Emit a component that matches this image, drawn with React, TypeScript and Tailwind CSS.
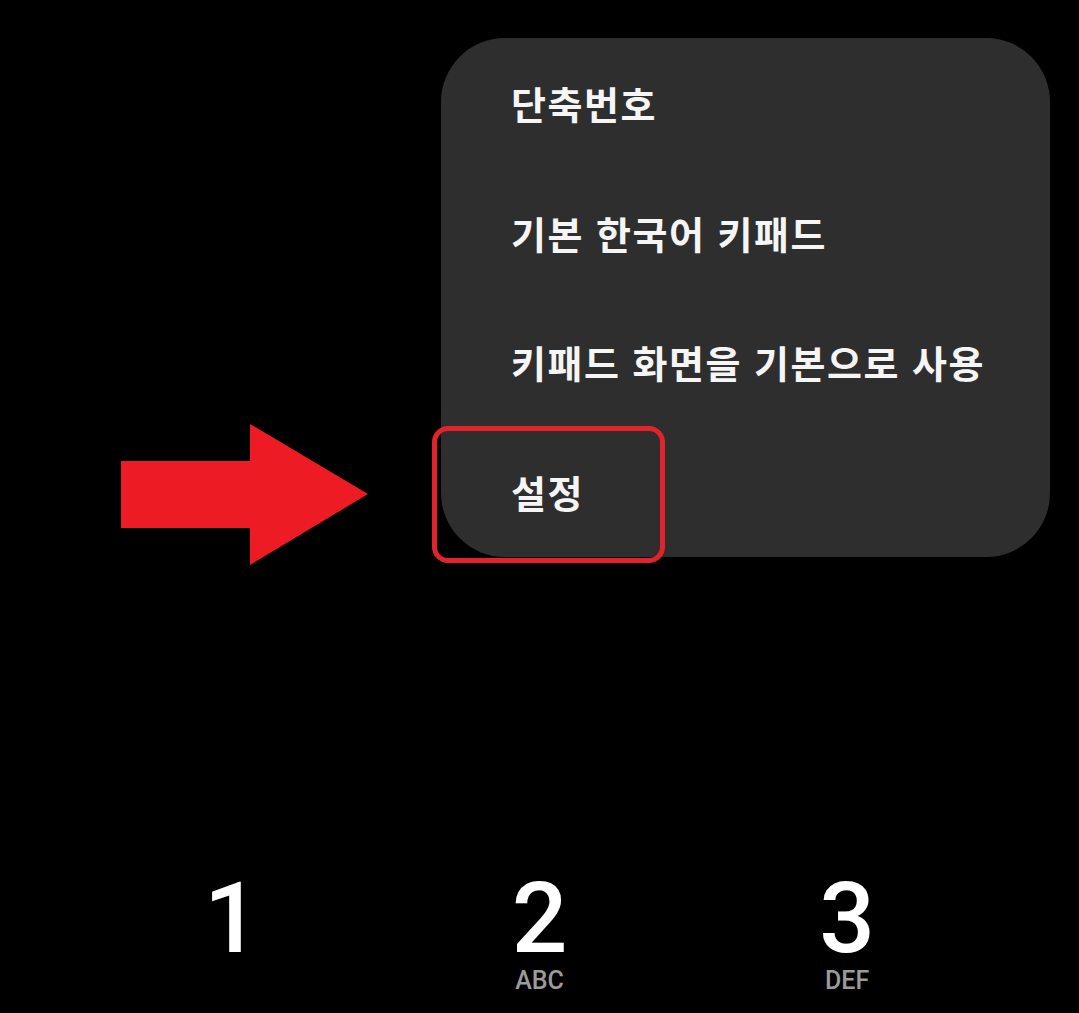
const menuItems = ['단축번호', '기본 한국어 키패드', '키패드 화면을 기본으로 사용', '설정'];

const keys = [
  { digit: '1', letters: '' },
  { digit: '2', letters: 'ABC' },
  { digit: '3', letters: 'DEF' },
];

function OverflowMenu() {
  return (
    <div className="absolute left-[441px] top-[38px] flex h-[519px] w-[609px] flex-col rounded-[64px] bg-[#2e2e2e]">
      {menuItems.map((label) => (
        <div key={label} className="flex flex-1 items-center pl-[70px]">
          <span className="text-[38px] font-semibold leading-none tracking-[1.5px] text-[#f5f5f5] [word-spacing:2px]">
            {label}
          </span>
        </div>
      ))}
    </div>
  );
}

function Annotations() {
  return (
    <>
      <svg className="absolute left-[121px] top-[424px]" width="247" height="141" viewBox="0 0 247 141">
        <polygon points="0,37 129,37 129,0 247,70 129,141 129,104 0,104" fill="#ed1c24" />
      </svg>
      <div className="absolute left-[432px] top-[426px] h-[137px] w-[233px] rounded-[16px] border-[5px] border-[#e3232b]" />
    </>
  );
}

export default function App() {
  return (
    <div
      className="relative flex h-[1013px] w-full flex-col justify-end overflow-hidden bg-black pb-[20px]"
      style={{ fontFamily: '"Noto Sans CJK KR", "Noto Sans", sans-serif' }}
    >
      <OverflowMenu />
      <Annotations />

      <div className="grid grid-cols-3 px-[78px]">
        {keys.map((k) => (
          <div key={k.digit} className="flex flex-col items-center">
            <span className="font-['Roboto'] text-[98px] font-medium leading-none text-white">{k.digit}</span>
            <span className="h-[25px] font-['Roboto'] text-[25px] font-medium leading-none text-[#9b9b9b]">
              {k.letters}
            </span>
          </div>
        ))}
      </div>
    </div>
  );
}
